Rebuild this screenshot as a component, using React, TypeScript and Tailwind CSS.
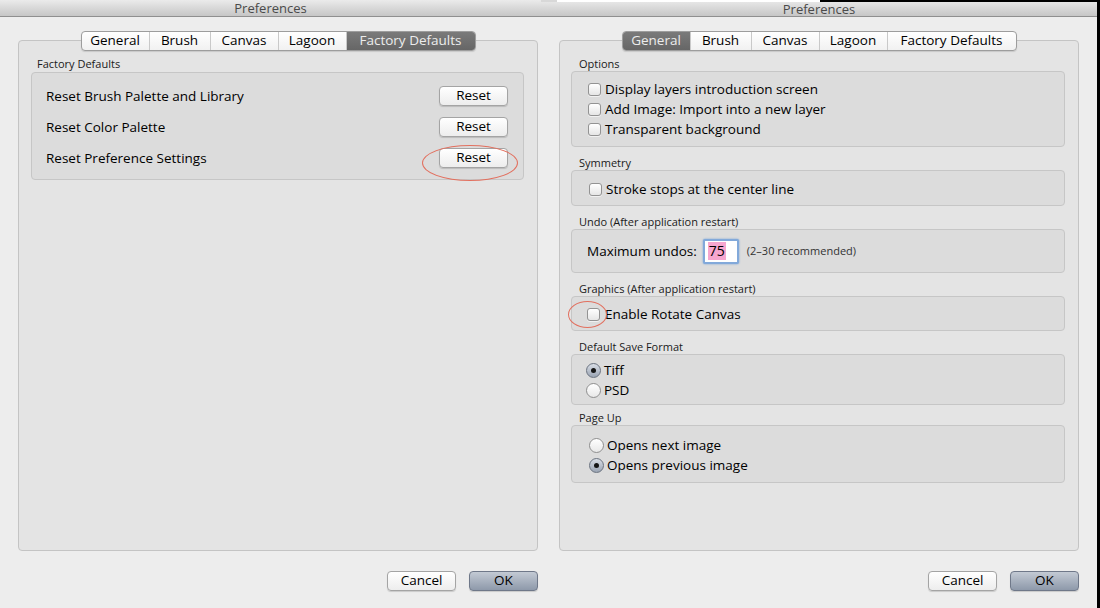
import React from 'react';

const FONT = "font-['Open_Sans','Liberation_Sans',sans-serif]";

const tabs = ['General', 'Brush', 'Canvas', 'Lagoon', 'Factory Defaults'];
const tabWidths: Record<string, string> = {
  General: 'w-[67px]',
  Brush: 'w-[61px]',
  Canvas: 'w-[68px]',
  Lagoon: 'w-[68px]',
  'Factory Defaults': 'w-[129px]',
};

function Tabs({ active }: { active: string }) {
  return (
    <div className="relative z-10 flex justify-center">
      <div className="flex h-[20px] rounded-[4px] border border-[#9d9d9d] bg-gradient-to-b from-[#ffffff] to-[#f1f1f1] shadow-[0_1px_1px_rgba(0,0,0,0.12)] overflow-hidden">
        {tabs.map((t, i) => {
          const on = t === active;
          return (
            <div
              key={t}
              className={`${tabWidths[t]} flex items-center justify-center text-[13.5px] leading-none ${
                i > 0 ? 'border-l border-[#c9c9c9]' : ''
              } ${on ? 'bg-gradient-to-b from-[#7a7a7a] to-[#666666] text-[#ececec]' : 'text-black'}`}
            >
              {t}
            </div>
          );
        })}
      </div>
    </div>
  );
}

function MacButton({ label, primary = false }: { label: string; primary?: boolean }) {
  return (
    <div
      className={`w-[69px] h-[20px] flex items-center justify-center rounded-[4px] text-[13.5px] leading-none text-black border shadow-[0_1px_1px_rgba(0,0,0,0.15)] ${
        primary
          ? 'bg-gradient-to-b from-[#c3cad4] to-[#8e99aa] border-[#6f7889]'
          : 'bg-gradient-to-b from-[#ffffff] to-[#ededed] border-[#a4a4a4]'
      }`}
    >
      {label}
    </div>
  );
}

function Checkbox() {
  return (
    <span className="w-[13px] h-[13px] shrink-0 rounded-[3px] border border-[#939393] bg-gradient-to-b from-[#ffffff] to-[#e6e6e6] shadow-[0_1px_0_rgba(255,255,255,0.6)]" />
  );
}

function Radio({ checked = false }: { checked?: boolean }) {
  return (
    <span
      className={`w-[15px] h-[15px] shrink-0 rounded-full border flex items-center justify-center ${
        checked
          ? 'border-[#6b7380] bg-gradient-to-b from-[#d9dee6] to-[#9aa4b3]'
          : 'border-[#8f8f8f] bg-gradient-to-b from-[#ffffff] to-[#e8e8e8]'
      }`}
    >
      {checked && <span className="w-[5px] h-[5px] rounded-full bg-[#151515]" />}
    </span>
  );
}

function Section({ label, className, children }: { label: string; className: string; children: React.ReactNode }) {
  return (
    <div>
      <div className="h-[14px] pl-[8px] text-[11px] leading-[14px] text-[#1a1a1a]">{label}</div>
      <div className={`rounded-[4px] border border-[#c6c6c6] bg-[#dcdcdc] ${className}`}>{children}</div>
    </div>
  );
}

function Ellipse({ className }: { className: string }) {
  return <div className={`absolute rounded-[50%] border-[1.5px] border-[#e2705f] pointer-events-none ${className}`} />;
}

function LeftWindow() {
  const rows = ['Reset Brush Palette and Library', 'Reset Color Palette', 'Reset Preference Settings'];
  return (
    <div className="w-[541px] h-full flex flex-col bg-[#ededed]">
      <div className="h-[17px] flex items-center justify-center bg-gradient-to-b from-[#ebebeb] to-[#c6c6c6] border-b border-[#8f8f8f] text-[13px] leading-none text-[#4a4a4a]">
        Preferences
      </div>
      <div className="pl-[18px] pr-[3px] pt-[14px]">
        <Tabs active="Factory Defaults" />
        <div className="-mt-[11px] h-[511px] rounded-[4px] border border-[#c4c4c4] bg-[#e4e4e4] pt-[16px] pl-[12px] pr-[13px]">
          <div className="h-[15px] pl-[6px] text-[11px] leading-[14px] text-[#1a1a1a]">Factory Defaults</div>
          <div className="relative rounded-[4px] border border-[#c6c6c6] bg-[#dcdcdc] pt-[13px] pb-[11px] pl-[14px] pr-[15px] flex flex-col gap-[11px]">
            {rows.map((r) => (
              <div key={r} className="h-[20px] flex items-center justify-between text-[13.5px] text-black">
                <span>{r}</span>
                <MacButton label="Reset" />
              </div>
            ))}
            <Ellipse className="left-[390px] top-[72px] w-[96px] h-[36px]" />
          </div>
        </div>
        <div className="flex justify-end gap-[13px] pt-[20px]">
          <MacButton label="Cancel" />
          <MacButton label="OK" primary />
        </div>
      </div>
    </div>
  );
}

function RightWindow() {
  const row = 'h-[20px] flex items-center text-[13.5px] text-black';
  return (
    <div className="flex-1 h-full flex flex-col bg-[#ededed] border-r-[3px] border-black">
      <div className="h-[2px] flex">
        <div className="w-[16px] bg-[#d8d8d8]" />
        <div className="w-[263px] bg-white" />
        <div className="flex-1 bg-black" />
      </div>
      <div className="h-[15px] flex items-center justify-center bg-gradient-to-b from-[#e6e6e6] to-[#c6c6c6] border-b border-[#8f8f8f] text-[13px] leading-none text-[#4a4a4a]">
        Preferences
      </div>
      <div className="pl-[18px] pr-[18px] pt-[14px]">
        <Tabs active="General" />
        <div className="-mt-[11px] h-[511px] rounded-[4px] border border-[#c4c4c4] bg-[#e4e4e4] pt-[16px] pl-[11px] pr-[13px] flex flex-col">
          <Section label="Options" className="pt-[7px] pb-[7px] pl-[16px] flex flex-col">
            {['Display layers introduction screen', 'Add Image: Import into a new layer', 'Transparent background'].map((t) => (
              <div key={t} className={`${row} gap-[4px]`}>
                <Checkbox />
                <span>{t}</span>
              </div>
            ))}
          </Section>
          <div className="mt-[9px]">
            <Section label="Symmetry" className="pt-[8px] pb-[6px] pl-[17px]">
              <div className={`${row} gap-[4px]`}>
                <Checkbox />
                <span>Stroke stops at the center line</span>
              </div>
            </Section>
          </div>
          <div className="mt-[9px]">
            <Section label="Undo (After application restart)" className="h-[44px] pl-[15px] flex items-center">
              <span className="text-[13.5px] text-black">Maximum undos:</span>
              <span className="ml-[6px] w-[36px] h-[25px] flex items-center bg-white border-[2px] border-[#82a9da] rounded-[2px] shadow-[0_0_2px_#6a9bd8] pl-[3px]">
                <span className="bg-[#f6a6cf] text-[14px] leading-[18px] text-black px-[1px]">75</span>
              </span>
              <span className="ml-[8px] text-[11px] text-[#333]">(2–30 recommended)</span>
            </Section>
          </div>
          <div className="mt-[9px]">
            <Section label="Graphics (After application restart)" className="relative pt-[7px] pb-[6px] pl-[15px]">
              <div className={`${row} gap-[5px]`}>
                <Checkbox />
                <span>Enable Rotate Canvas</span>
              </div>
              <Ellipse className="left-[-4px] top-[4px] w-[39px] h-[27px]" />
            </Section>
          </div>
          <div className="mt-[9px]">
            <Section label="Default Save Format" className="pt-[5px] pb-[4px] pl-[14px]">
              {[
                { t: 'Tiff', c: true },
                { t: 'PSD', c: false },
              ].map((r) => (
                <div key={r.t} className={`${row} gap-[3px]`}>
                  <Radio checked={r.c} />
                  <span>{r.t}</span>
                </div>
              ))}
            </Section>
          </div>
          <div className="mt-[6px]">
            <Section label="Page Up" className="pt-[9px] pb-[7px] pl-[17px]">
              {[
                { t: 'Opens next image', c: false },
                { t: 'Opens previous image', c: true },
              ].map((r) => (
                <div key={r.t} className={`${row} gap-[3px]`}>
                  <Radio checked={r.c} />
                  <span>{r.t}</span>
                </div>
              ))}
            </Section>
          </div>
        </div>
        <div className="flex justify-end gap-[13px] pt-[20px]">
          <MacButton label="Cancel" />
          <MacButton label="OK" primary />
        </div>
      </div>
    </div>
  );
}

export default function App() {
  return (
    <div className={`${FONT} w-[1100px] h-[608px] flex overflow-hidden bg-[#ededed]`}>
      <LeftWindow />
      <RightWindow />
    </div>
  );
}
